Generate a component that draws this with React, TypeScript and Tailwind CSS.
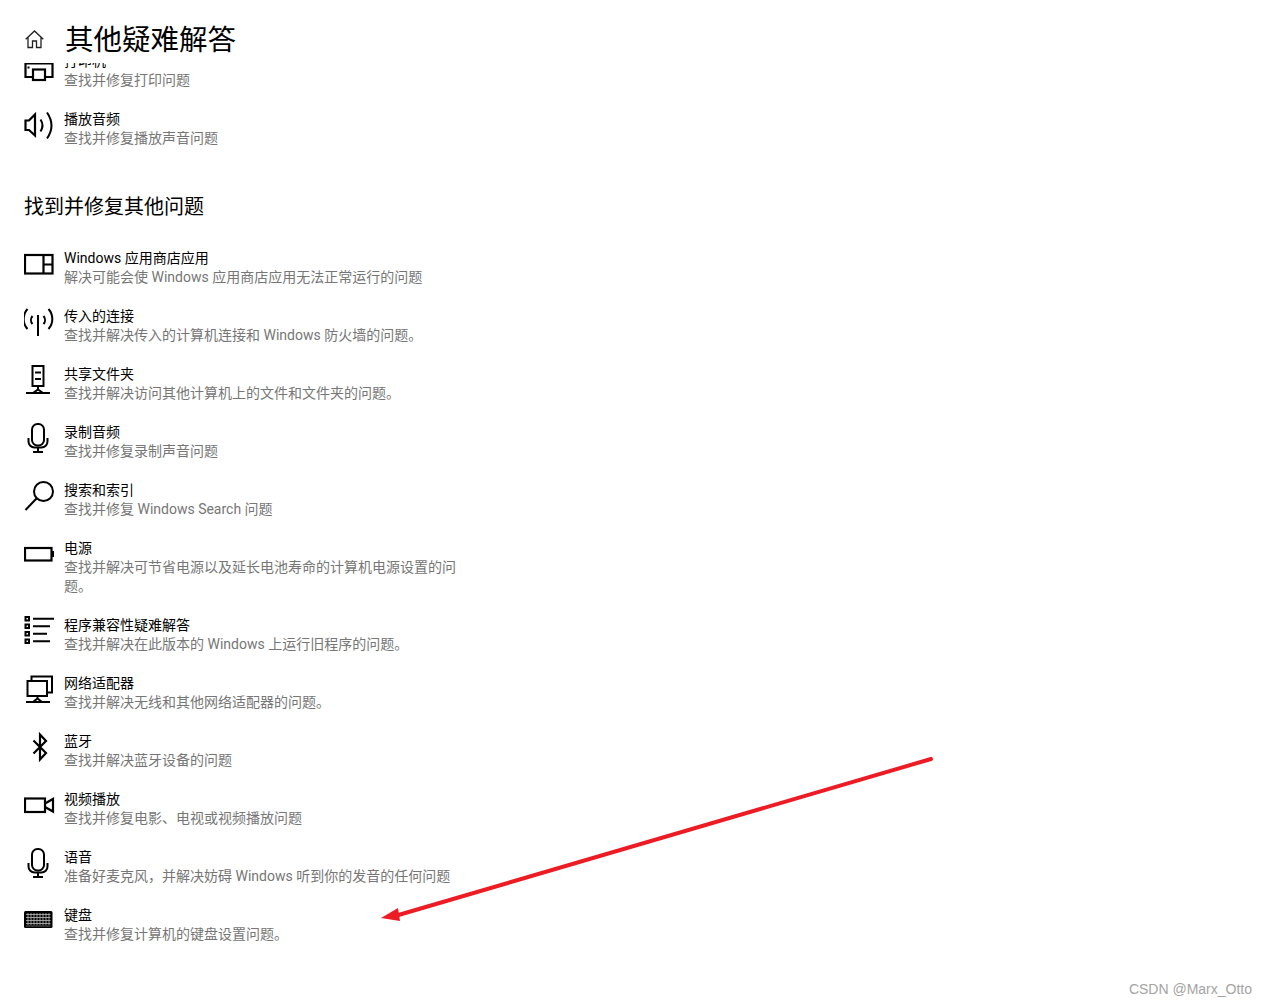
import React from "react";

const stroke = { fill: "none", stroke: "#000", strokeWidth: 2 } as const;

const I = ({ children }: { children: React.ReactNode }) => (
  <svg width="32" height="32" viewBox="0 0 32 32" className="shrink-0 mt-[-2.5px]" {...stroke}>
    {children}
  </svg>
);

const Mic = () => (
  <I>
    <rect x="8" y="3" width="12" height="21.5" rx="5.5" />
    <path d="M4.5 17v3.5a6 6 0 0 0 6 6h7a6 6 0 0 0 6-6V17M14 26.5V31M9 31h10" />
  </I>
);

const icons: Record<string, React.ReactNode> = {
  printer: (
    <I>
      <path d="M9 27H1.5V13.5h27V27H21" strokeWidth="2.2" />
      <rect x="9" y="19.5" width="12" height="10.5" strokeWidth="2.2" />
      <rect x="3.5" y="16.5" width="2" height="2" fill="#000" stroke="none" />
    </I>
  ),
  speaker: (
    <I>
      <path d="M1.5 12.5H5L11 6.5v21L5 22H1.5z" strokeWidth="2.2" />
      <path d="M16.5 11.5Q20.5 17.5 16.5 23.5" />
      <path d="M23 4.5Q32 17.5 23 30.5" />
    </I>
  ),
  store: (
    <I>
      <rect x="1" y="8" width="27.5" height="18.5" strokeWidth="2.2" />
      <path d="M19.5 8v18.5M19.5 17.5h9" strokeWidth="2.2" />
    </I>
  ),
  antenna: (
    <I>
      <path d="M14 10v21" />
      <path d="M3.5 4a15 15 0 0 0 0 20M24.5 4a15 15 0 0 1 0 20M8.5 11a6 6 0 0 0 0 8M19.5 11a6 6 0 0 1 0 8" />
    </I>
  ),
  share: (
    <I>
      <rect x="8.5" y="3" width="11" height="20" />
      <path d="M11 9.5h6M11 16h6M14 23v4M2 30h24M9 30l5-3.5 5 3.5" />
    </I>
  ),
  mic: <Mic />,
  search: (
    <I>
      <circle cx="19.5" cy="12.5" r="9.5" />
      <path d="M12.5 19.5 1.5 31" />
    </I>
  ),
  battery: (
    <I>
      <rect x="1" y="11" width="26.5" height="12.5" strokeWidth="2.2" />
      <rect x="28" y="14" width="2" height="6" fill="#000" stroke="none" />
    </I>
  ),
  list: (
    <I>
      <rect x="1.5" y="3" width="3.5" height="3.5" />
      <rect x="1.5" y="10.5" width="3.5" height="3.5" />
      <rect x="1.5" y="18" width="3.5" height="3.5" />
      <rect x="1.5" y="25.5" width="3.5" height="3.5" />
      <path d="M9 4.7h21M9 12.2h17M9 19.7h14M9 27.2h17" />
    </I>
  ),
  network: (
    <I>
      <rect x="3.5" y="9" width="19.5" height="15" />
      <path d="M7.5 9V4.5H28V20.5H23M13.5 24v3M2 30h24M9 30l4.5-3.5L18 30" />
    </I>
  ),
  bluetooth: (
    <I>
      <path d="M9.5 10.5 22 23l-6 6.5v-25L22 11 9.5 23.5" strokeWidth="2.2" />
    </I>
  ),
  video: (
    <I>
      <rect x="1" y="10.5" width="20" height="13.5" strokeWidth="2.2" />
      <path d="M21 15.5 29 11v12.5L21 19" strokeWidth="2.2" />
    </I>
  ),
  keyboard: (
    <I>
      <rect x="0" y="7" width="28.5" height="17" rx="1.5" fill="#000" stroke="none" />
      <path
        d="M2 10.5h24.5M2 13.5h24.5M2 16.5h24.5M2 19.5h24.5M4 9v12M7 9v12M10 9v12M13 9v12M16 9v12M19 9v12M22 9v12M25 9v12"
        stroke="#bbb"
        strokeWidth="0.8"
      />
      <path d="M2 22h24.5" stroke="#777" strokeWidth="0.8" />
    </I>
  ),
};

const Row = ({ icon, title, sub, className = "" }: { icon: string; title: string; sub: string; className?: string }) => (
  <div className={`flex ${className}`}>
    <div className="w-[40px] shrink-0">{icons[icon]}</div>
    <div className="w-[400px] text-[14px] leading-[19px]">
      <div className="text-black">{title}</div>
      <div className="text-[#767676]">{sub}</div>
    </div>
  </div>
);

const rows = [
  ["store", "Windows 应用商店应用", "解决可能会使 Windows 应用商店应用无法正常运行的问题"],
  ["antenna", "传入的连接", "查找并解决传入的计算机连接和 Windows 防火墙的问题。"],
  ["share", "共享文件夹", "查找并解决访问其他计算机上的文件和文件夹的问题。"],
  ["mic", "录制音频", "查找并修复录制声音问题"],
  ["search", "搜索和索引", "查找并修复 Windows Search 问题"],
  ["battery", "电源", "查找并解决可节省电源以及延长电池寿命的计算机电源设置的问题。"],
  ["list", "程序兼容性疑难解答", "查找并解决在此版本的 Windows 上运行旧程序的问题。"],
  ["network", "网络适配器", "查找并解决无线和其他网络适配器的问题。"],
  ["bluetooth", "蓝牙", "查找并解决蓝牙设备的问题"],
  ["video", "视频播放", "查找并修复电影、电视或视频播放问题"],
  ["mic", "语音", "准备好麦克风，并解决妨碍 Windows 听到你的发音的任何问题"],
  ["keyboard", "键盘", "查找并修复计算机的键盘设置问题。"],
];

export default function App() {
  return (
    <div className="relative w-[1267px] h-[1005px] overflow-hidden bg-white font-['Roboto','Noto_Sans_CJK_SC',sans-serif]">
      <header className="h-[63px] flex items-center pl-[25px] pt-[19px]">
        <svg width="19" height="19" viewBox="0 0 19 19" fill="none" stroke="#222" strokeWidth="1.3" className="mr-[22px] mt-[-3px]">
          <path d="M.7 9.3 9.5 1l8.8 8.3M3 7.5V17.5h4.5V11h4v6.5H16V7.5" />
        </svg>
        <h1 className="ml-[-1px] text-[28.5px] leading-[38px] font-normal text-black">其他疑难解答</h1>
      </header>
      <main className="h-[942px] overflow-hidden pl-[24px]">
        <Row className="mt-[-11px] mb-[20px]" icon="printer" title="打印机" sub="查找并修复打印问题" />
        <Row icon="speaker" title="播放音频" sub="查找并修复播放声音问题" />
        <h2 className="mt-[45px] mb-[28px] text-[20px] leading-[28px] font-normal text-black">找到并修复其他问题</h2>
        <div className="flex flex-col gap-[20px]">
          {rows.map(([icon, title, sub]) => (
            <Row key={title} icon={icon} title={title} sub={sub} />
          ))}
        </div>
      </main>
      <svg width="560" height="170" viewBox="0 0 560 170" className="absolute left-[378px] top-[753px]">
        <path d="M553 6 17 163" stroke="#ed1c24" strokeWidth="4" strokeLinecap="round" fill="none" />
        <path d="M3 165 20 155 22 168z" fill="#ed1c24" />
      </svg>
      <div className="absolute right-[15px] top-[980px] font-['Liberation_Sans',sans-serif] text-[14px] leading-[18px] text-[#a3a3a3]">
        CSDN @Marx_Otto
      </div>
    </div>
  );
}
